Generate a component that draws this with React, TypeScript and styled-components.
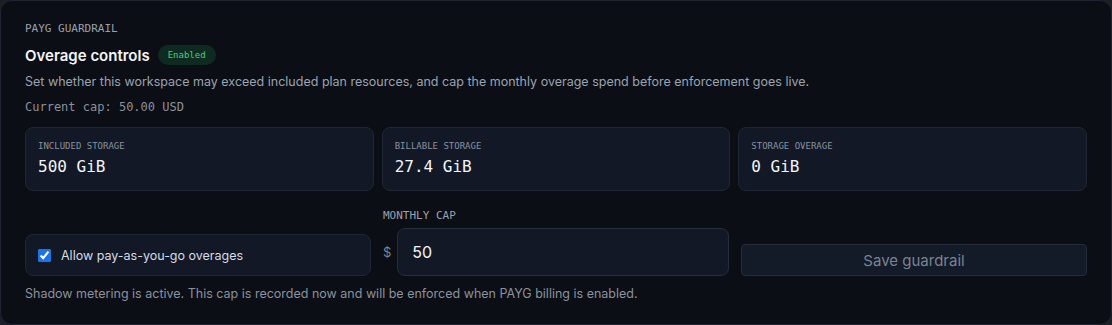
import React from "react";
import styled, { createGlobalStyle } from "styled-components";

const GlobalStyle = createGlobalStyle`
  html, body { margin: 0; padding: 0; background: #1c1f26; }
  body { font-family: Inter, "Noto Sans", sans-serif; -webkit-font-smoothing: antialiased; }
  * { box-sizing: border-box; }
`;

const mono = `"DejaVu Sans Mono", "Liberation Mono", monospace`;

const Panel = styled.section`
  width: 1112px;
  height: 325px;
  background: #0b0e14;
  border: 1px solid #1f2430;
  border-radius: 12px;
  padding: 19px 24px 0 24px;
  display: flex;
  flex-direction: column;
`;

const Eyebrow = styled.div`
  font-family: ${mono};
  font-size: 11px;
  line-height: 18px;
  color: #9aa1ad;
`;

const TitleRow = styled.div`
  display: flex;
  align-items: center;
  gap: 8px;
  margin-top: 7px;
  height: 20px;
`;

const Title = styled.h2`
  margin: 0;
  font-size: 15px;
  font-weight: 600;
  color: #f3f5f8;
`;

const Badge = styled.span`
  font-family: ${mono};
  font-size: 9px;
  color: #34d67f;
  background: #0f2a21;
  border-radius: 999px;
  padding: 0 10px;
  height: 20px;
  display: inline-flex;
  align-items: center;
`;

const Description = styled.p`
  margin: 8px 0 0 0;
  font-size: 12.5px;
  line-height: 18px;
  color: #9ba3b1;
`;

const Cap = styled.div`
  font-family: ${mono};
  font-size: 12px;
  line-height: 18px;
  margin-top: 7px;
  color: #8a919c;
`;

const StatGrid = styled.div`
  display: grid;
  grid-template-columns: repeat(3, 1fr);
  gap: 8px;
  margin-top: 11px;
`;

const StatCard = styled.div`
  background: #121826;
  border: 1px solid #1f2634;
  border-radius: 8px;
  height: 64px;
  padding: 11px 12px 0 12px;
`;

const StatLabel = styled.div`
  font-family: ${mono};
  font-size: 9px;
  line-height: 14px;
  color: #8a919e;
`;

const StatValue = styled.div`
  font-family: ${mono};
  font-size: 16px;
  line-height: 20px;
  margin-top: 4px;
  color: #f3f5f8;
`;

const ControlGrid = styled.div`
  display: grid;
  grid-template-columns: repeat(3, 1fr);
  gap: 12px;
  align-items: end;
  margin-top: 18px;
`;

const CheckCard = styled.label`
  display: flex;
  align-items: center;
  gap: 10px;
  height: 42px;
  padding: 0 12px;
  background: #121826;
  border: 1px solid #1f2634;
  border-radius: 8px;
  font-size: 12.5px;
  color: #d7dbe2;
`;

const Check = styled.input`
  width: 13px;
  height: 13px;
  margin: 0;
  accent-color: #1a73e8;
`;

const CapField = styled.div`
  display: flex;
  flex-direction: column;
  gap: 5px;
`;

const FieldLabel = styled.div`
  font-family: ${mono};
  font-size: 11px;
  line-height: 14px;
  color: #9aa1ad;
`;

const InputRow = styled.div`
  display: flex;
  align-items: center;
  gap: 6px;
`;

const Currency = styled.span`
  font-size: 13px;
  color: #7d8593;
`;

const CapInput = styled.input`
  flex: 1;
  min-width: 0;
  height: 48px;
  background: #121826;
  border: 1px solid #262d3b;
  border-radius: 8px;
  padding: 0 14px;
  font-family: Inter, "Noto Sans", sans-serif;
  font-size: 16px;
  color: #f3f5f8;
  outline: none;
`;

const SaveButton = styled.button`
  height: 32px;
  background: #131a28;
  border: 1px solid #252c3a;
  border-radius: 4px;
  font-family: Inter, "Noto Sans", sans-serif;
  font-size: 15px;
  color: #7a8394;
  cursor: not-allowed;
`;

const Footnote = styled.p`
  margin: 9px 0 0 0;
  font-size: 12.5px;
  line-height: 18px;
  color: #8a929f;
`;

const stats = [
  { label: "INCLUDED STORAGE", value: "500 GiB" },
  { label: "BILLABLE STORAGE", value: "27.4 GiB" },
  { label: "STORAGE OVERAGE", value: "0 GiB" },
];

export default function App() {
  return (
    <>
      <GlobalStyle />
      <Panel>
        <Eyebrow>PAYG GUARDRAIL</Eyebrow>
        <TitleRow>
          <Title>Overage controls</Title>
          <Badge>Enabled</Badge>
        </TitleRow>
        <Description>
          Set whether this workspace may exceed included plan resources, and cap the monthly overage spend before enforcement goes live.
        </Description>
        <Cap>Current cap: 50.00 USD</Cap>
        <StatGrid>
          {stats.map((s) => (
            <StatCard key={s.label}>
              <StatLabel>{s.label}</StatLabel>
              <StatValue>{s.value}</StatValue>
            </StatCard>
          ))}
        </StatGrid>
        <ControlGrid>
          <CheckCard>
            <Check type="checkbox" defaultChecked />
            Allow pay-as-you-go overages
          </CheckCard>
          <CapField>
            <FieldLabel>MONTHLY CAP</FieldLabel>
            <InputRow>
              <Currency>$</Currency>
              <CapInput defaultValue="50" />
            </InputRow>
          </CapField>
          <SaveButton disabled>Save guardrail</SaveButton>
        </ControlGrid>
        <Footnote>
          Shadow metering is active. This cap is recorded now and will be enforced when PAYG billing is enabled.
        </Footnote>
      </Panel>
    </>
  );
}
